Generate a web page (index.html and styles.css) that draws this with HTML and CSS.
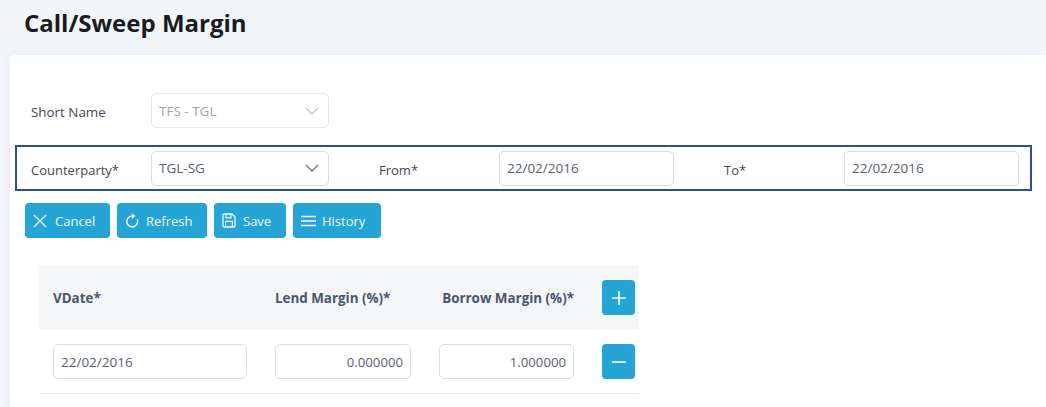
FILE: index.html
```html
<!DOCTYPE html>
<html lang="en">
<head>
<meta charset="utf-8">
<title>Call/Sweep Margin</title>
<link rel="stylesheet" href="styles.css">
</head>
<body>
<h1 class="page-title">Call/Sweep Margin</h1>
<main class="card">
  <div class="field-row">
    <label class="field-label label-wide">Short Name</label>
    <div class="select select-disabled"><span>TFS - TGL</span>
      <svg class="chevron" width="14" height="8" viewBox="0 0 14 8"><path d="M1 1l6 6 6-6" fill="none" stroke="currentColor" stroke-width="1.4"/></svg>
    </div>
  </div>
  <div class="filter-row">
    <label class="field-label">Counterparty*</label>
    <div class="select"><span>TGL-SG</span>
      <svg class="chevron" width="14" height="8" viewBox="0 0 14 8"><path d="M1 1l6 6 6-6" fill="none" stroke="currentColor" stroke-width="1.4"/></svg>
    </div>
    <label class="field-label label-from">From*</label>
    <input class="text-input date-input" value="22/02/2016">
    <label class="field-label label-from">To*</label>
    <input class="text-input date-input" value="22/02/2016">
  </div>
  <div class="toolbar">
    <button class="btn btn-cancel"><svg width="14" height="14" viewBox="0 0 14 14"><path d="M1 1l12 12M13 1L1 13" stroke="currentColor" stroke-width="1.4" fill="none"/></svg>Cancel</button>
    <button class="btn btn-refresh"><svg width="13" height="15" viewBox="0 0 13 15"><path d="M11.2 6.4A5.4 5.4 0 1 1 6.4 3.1" stroke="currentColor" stroke-width="1.5" fill="none"/><path d="M5.8 0.2l3.6 2.9-3.6 2.9z" fill="currentColor"/></svg>Refresh</button>
    <button class="btn btn-save"><svg width="14" height="15" viewBox="0 0 14 15"><path d="M1.8 1h8.2L13 4v8.8a1.2 1.2 0 0 1-1.2 1.2H2.2A1.2 1.2 0 0 1 1 12.8V1.8A.8.8 0 0 1 1.8 1z" stroke="currentColor" stroke-width="1.3" fill="none"/><path d="M4 1.2v3.6h5V1.2M3.6 13.8V8.4h6.8v5.4" stroke="currentColor" stroke-width="1.2" fill="none"/></svg>Save</button>
    <button class="btn btn-history"><svg width="15" height="12" viewBox="0 0 15 12"><path d="M0 1.5h15M0 6h15M0 10.5h15" stroke="currentColor" stroke-width="1.7" fill="none"/></svg>History</button>
  </div>
  <div class="grid-table">
    <div class="grid-row grid-head">
      <div class="col-head">VDate*</div>
      <div class="col-head">Lend Margin (%)*</div>
      <div class="col-head col-head-right">Borrow Margin (%)*</div>
      <button class="icon-btn"><svg width="16" height="16" viewBox="0 0 16 16"><path d="M8 1v14M1 8h14" stroke="currentColor" stroke-width="1.7" fill="none"/></svg></button>
    </div>
    <div class="grid-row grid-body">
      <input class="text-input date-text" value="22/02/2016">
      <input class="text-input num" value="0.000000">
      <input class="text-input num" value="1.000000">
      <button class="icon-btn"><svg width="16" height="16" viewBox="0 0 16 16"><path d="M1 8h14" stroke="currentColor" stroke-width="1.7" fill="none"/></svg></button>
    </div>
  </div>
</main>
</body>
</html>
```
FILE: styles.css
```css
* { box-sizing: border-box; }
html, body { height: 100%; }
body {
  margin: 0;
  overflow: hidden;
  background: #f3f6f9;
  font-family: "Open Sans", "Noto Sans", sans-serif;
  font-size: 13px;
  color: #3f4254;
}
.page-title {
  margin: 0;
  height: 55px;
  padding: 5px 0 0 24px;
  font-size: 24px;
  line-height: 36px;
  font-weight: 700;
  color: #181c22;
}
.card {
  margin-left: 10px;
  height: 352px;
  background: #fff;
  border-top-left-radius: 5px;
  padding: 38px 0 0 5px;
  box-shadow: -4px 0 10px rgba(60, 70, 90, 0.04);
}
.field-row {
  display: flex;
  align-items: center;
  padding-left: 16px;
  margin-bottom: 17px;
}
.field-label {
  width: 120px;
  flex: none;
  color: #44484f;
  position: relative;
  top: 1px;
}
.label-wide { font-size: 13.4px; }
.select {
  width: 178px;
  height: 35px;
  flex: none;
  display: flex;
  align-items: center;
  justify-content: space-between;
  padding: 0 9px 0 7px;
  border: 1px solid #d9dde8;
  border-radius: 5px;
  font-size: 13.5px;
  color: #5a6270;
  background: #fff;
}
.select-disabled { color: #98a4bd; border-color: #e6e8ee; }
.select-disabled .chevron { color: #c2c6d0; }
.chevron { color: #6b7385; }
.filter-row {
  width: 1017px;
  height: 46px;
  display: flex;
  align-items: center;
  padding-left: 14px;
  border: 2px solid #2f5090;
}
.filter-row .field-label { top: 2px; }
.label-from { margin-left: 50px; }
.text-input {
  height: 35px;
  width: 100%;
  min-width: 0;
  padding: 0 7px;
  font: inherit;
  color: #5a6270;
  background: #fff;
  border: 1px solid #d9dde8;
  border-radius: 5px;
  outline: none;
}
.date-input { width: 175px; flex: none; font-size: 13.5px; }
.date-text { font-size: 13.5px; }
.num { text-align: right; font-size: 13.2px; }
.toolbar {
  display: flex;
  gap: 7px;
  margin: 12px 0 0 10px;
}
.btn {
  height: 35px;
  display: inline-flex;
  align-items: center;
  gap: 7px;
  padding: 0 0 0 8px;
  border: 0;
  border-radius: 4px;
  background: #25a4d6;
  color: #f2fafd;
  font: inherit;
}
.btn-cancel { width: 85px; gap: 8px; }
.btn-refresh { width: 90px; padding-left: 9px; gap: 7px; }
.btn-save { width: 72px; }
.btn-history { width: 88px; gap: 6px; }
.grid-table {
  width: 600px;
  margin: 28px 0 0 24px;
}
.grid-row {
  display: grid;
  grid-template-columns: 194px 136px 135px 33px;
  column-gap: 28px;
  align-items: center;
  padding-left: 14px;
}
.grid-head { height: 64px; padding-bottom: 1px; background: #f5f6f8; }
.grid-body { height: 64px; border-bottom: 1px solid #e8e9ee; }
.col-head { font-weight: 700; font-size: 13.4px; color: #4a5570; white-space: nowrap; }
.col-head-right { text-align: right; }
.icon-btn {
  width: 33px;
  height: 35px;
  padding: 0;
  display: flex;
  align-items: center;
  justify-content: center;
  border: 0;
  border-radius: 4px;
  background: #25a4d6;
  color: #f2fafd;
}
```
